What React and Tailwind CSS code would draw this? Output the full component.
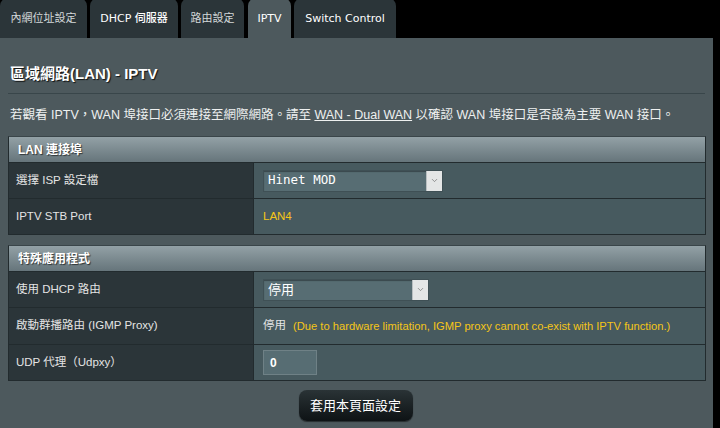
import { ChevronDown } from 'lucide-react';

const tabs = [
  { label: '內網位址設定', w: 'w-[87px]', gap: '' },
  { label: 'DHCP 伺服器', w: 'w-[88px]', gap: 'ml-[3px]' },
  { label: '路由設定', w: 'w-[63px]', gap: 'ml-[3px]' },
  { label: 'IPTV', w: 'w-[43px]', gap: 'ml-[4px]', active: true },
  { label: 'Switch Control', w: 'w-[102px]', gap: 'ml-[3px]' },
];

const FakeSelect = ({ value, width, mono }) => (
  <div className={`${width} h-[22px] flex items-stretch bg-[#576d73] border border-[#3f5055] shadow-[inset_0_1px_1px_rgba(0,0,0,0.35)]`}>
    <span
      className={`flex-1 flex items-center pl-[4px] text-white ${
        mono ? "font-['DejaVu_Sans_Mono',monospace] text-[12.5px]" : 'text-[13px]'
      }`}
    >
      {value}
    </span>
    <span className="w-[16px] flex items-center justify-center bg-[#e4e6e6] border-l border-[#b9bfc1]">
      <ChevronDown className="w-[9px] h-[9px] text-[#777]" strokeWidth={2} />
    </span>
  </div>
);

const Row = ({ label, children, h = 'h-[36px]' }) => (
  <div className={`flex ${h} border-t border-[#222b2e]`}>
    <div className="w-[245px] shrink-0 bg-[#2b3539] flex items-center pl-[7px] text-[11.5px] text-[#e4e4e4] border-r border-[#222b2e]">
      {label}
    </div>
    <div className="flex-1 bg-[#475a5f] flex items-center pl-[9px] text-[11.5px] text-[#e4e4e4]">
      {children}
    </div>
  </div>
);

const SectionHeader = ({ children }) => (
  <div className="h-[25px] flex items-center pl-[9px] bg-gradient-to-b from-[#93a1a6] to-[#66757b] text-[12px] font-bold text-white [text-shadow:1px_1px_1px_rgba(0,0,0,0.6)]">
    {children}
  </div>
);

export default function App() {
  return (
    <div className="w-[720px] h-[428px] bg-black overflow-hidden font-['Liberation_Sans','Noto_Sans_CJK_TC',sans-serif]">
      <div className="flex h-[38px] items-end">
        {tabs.map((t) => (
          <div
            key={t.label}
            className={`${t.w} ${t.gap} h-[40px] rounded-t-[8px] flex items-center justify-center pt-[2px] text-[11px] whitespace-nowrap font-['DejaVu_Sans','Noto_Sans_CJK_TC',sans-serif] ${
              t.active ? 'bg-[#4d595d] text-white' : 'bg-[#2b3539] text-white'
            }`}
          >
            <span className={t.label.match(/[A-Z]/) ? 'font-medium' : 'text-[#d4d8d9]'}>{t.label}</span>
          </div>
        ))}
      </div>

      <div className="w-[713px] h-[390px] bg-[#4d595d] px-[8px] flex flex-col">
        <h1 className="mt-[26px] h-[20px] pl-[2px] text-[15px] font-bold text-white [text-shadow:1px_1px_1px_rgba(0,0,0,0.8)] leading-[20px]">
          區域網路(LAN) - IPTV
        </h1>
        <div className="mt-[9px] h-px bg-[#39464a] w-[697px]" />
        <p className="mt-[13px] h-[16px] pl-[2px] text-[12.5px] leading-[16px] text-[#eef0f0] whitespace-nowrap">
          若觀看 IPTV，WAN 埠接口必須連接至網際網路。請至 <span className="underline">WAN - Dual WAN</span> 以確認 WAN 埠接口是否設為主要 WAN 接口。
        </p>

        <div className="mt-[13px] w-[698px] border border-[#222b2e] border-t-[#3a4549]">
          <SectionHeader>LAN 連接埠</SectionHeader>
          <Row label="選擇 ISP 設定檔">
            <FakeSelect value="Hinet MOD" width="w-[180px]" mono />
          </Row>
          <Row label="IPTV STB Port" h="h-[36px]">
            <span className="text-[#f5c518]">LAN4</span>
          </Row>
        </div>

        <div className="mt-[10px] w-[698px] border border-[#222b2e] border-t-[#3a4549]">
          <SectionHeader>特殊應用程式</SectionHeader>
          <Row label="使用 DHCP 路由">
            <FakeSelect value="停用" width="w-[166px]" />
          </Row>
          <Row label="啟動群播路由 (IGMP Proxy)" h="h-[37px]">
            <span>停用</span>
            <span className="ml-[7px] text-[11.2px] text-[#f5c518]">
              (Due to hardware limitation, IGMP proxy cannot co-exist with IPTV function.)
            </span>
          </Row>
          <Row label="UDP 代理（Udpxy）" h="h-[36px]">
            <div className="w-[54px] h-[25px] flex items-center pl-[6px] bg-[#576d73] border border-[#6f8186] text-white text-[12px] font-bold">
              0
            </div>
          </Row>
        </div>

        <div className="flex justify-center mt-[9px]">
          <button className="w-[114px] h-[31px] ml-[-2px] rounded-[8px] bg-gradient-to-b from-[#2a3336] to-[#0e1315] text-white text-[13px] shadow-[0_1px_1px_rgba(0,0,0,0.5)]">
            套用本頁面設定
          </button>
        </div>
      </div>
    </div>
  );
}
